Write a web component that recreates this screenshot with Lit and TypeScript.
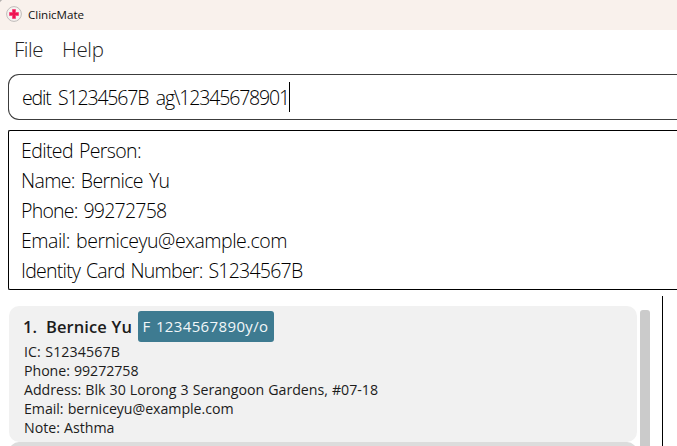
import { LitElement, html, css, svg } from "lit";
import { customElement, property } from "lit/decorators.js";

/** One line of text whose tracking is adjusted to fill a given advance width. */
@customElement("fit-text")
class FitText extends LitElement {
  @property() text = "";
  @property({ type: Number }) width = 0;

  static styles = css`
    :host { display: block; white-space: pre; }
    .run { display: inline-block; }
  `;

  async firstUpdated() {
    await document.fonts.ready;
    const run = this.renderRoot.querySelector(".run") as HTMLElement;
    const natural = run.getBoundingClientRect().width;
    run.style.letterSpacing = `${(this.width - natural) / this.text.length}px`;
  }

  render() {
    return html`<span class="run">${this.text}</span>`;
  }
}

@customElement("app-root")
class AppRoot extends LitElement {
  static styles = css`
    :host {
      display: flex;
      flex-direction: column;
      width: 677px;
      height: 446px;
      overflow: hidden;
      background: #fff;
      color: #000;
      font-family: "Open Sans", "Noto Sans", sans-serif;
    }
    * { box-sizing: border-box; }
    .titlebar {
      flex: none;
      height: 30px;
      display: flex;
      align-items: center;
      gap: 6px;
      padding: 0 0 2px 6px;
      background: radial-gradient(circle at 6px 6px, #f9f1ec 6.5px, #b4b0ae 7.5px) 0 0 / 6px 6px no-repeat, #f9f1ec;
      font-size: 11.6px;
      color: #111;
    }
    .titlebar svg { display: block; }
    .menubar {
      flex: none;
      height: 44px;
      display: flex;
      gap: 19px;
      padding: 4px 0 0 14px;
      font-size: 20.5px;
      font-weight: 300;
      line-height: 30px;
      color: #222;
    }
    .command {
      flex: none;
      height: 46px;
      margin-left: 8px;
      display: flex;
      align-items: center;
      padding-left: 13px;
      border: 1px solid #3c3c3c;
      border-right: 0;
      border-radius: 11px 0 0 11px;
      font-size: 19.5px;
      font-weight: 300;
      line-height: 30px;
      word-spacing: 3.5px;
    }
    .command fit-text { padding-top: 1px; }
    .caret { width: 1px; height: 30px; background: #000; }
    .result {
      flex: none;
      height: 160px;
      margin: 10px 0 0 8px;
      padding: 5px 0 0 12px;
      border: 1px solid #000;
      border-right: 0;
      border-radius: 2px 0 0 2px;
      font-size: 19.5px;
      font-weight: 300;
      line-height: 30px;
      word-spacing: 1.5px;
    }
    .main { flex: 1; display: flex; padding-top: 6px; min-height: 0; }
    .list { width: 628px; margin-left: 9px; padding-top: 10px; }
    .card {
      height: 136px;
      border-radius: 10px;
      padding: 5px 0 0 15px;
      background: #f1f1f1;
      color: #1c1c1c;
      font-size: 14.2px;
      line-height: 19px;
      word-spacing: 0.5px;
    }
    .card.alt { background: #dcdcdc; }
    .head { display: flex; height: 31px; }
    .name { display: flex; font-size: 16.5px; font-weight: 600; line-height: 31px; }
    .name .num { width: 23px; margin-left: -1px; }
    .tag {
      width: 136px;
      margin-left: 6px;
      padding-left: 4.5px;
      border-radius: 3px;
      background: #3e7b91;
      color: #f2f7f9;
      font-size: 15px;
      line-height: 31px;
      word-spacing: 1px;
    }
    .scroll { width: 10px; margin: 14px 0 0 3px; border-radius: 3px 3px 0 0; background: #cbcbcb; }
    .divider { width: 1px; margin-left: 12px; background: #000; }
  `;

  private result: [string, number][] = [
    ["Edited Person:", 120],
    ["Name: Bernice Yu", 148.5],
    ["Phone: 99272758", 145.5],
    ["Email: berniceyu@example.com", 266],
    ["Identity Card Number: S1234567B", 281.5],
  ];

  private details: [string, number][] = [
    ["IC: S1234567B", 96],
    ["Phone: 99272758", 114.5],
    ["Address: Blk 30 Lorong 3 Serangoon Gardens, #07-18", 354],
    ["Email: berniceyu@example.com", 209.5],
    ["Note: Asthma", 90.5],
  ];

  private fit([text, width]: [string, number]) {
    return html`<fit-text .text=${text} .width=${width}></fit-text>`;
  }

  render() {
    return html`
      <div class="titlebar">
        <svg width="16" height="16" viewBox="0 0 16 16">
          ${svg`<circle cx="8" cy="8" r="7.4" fill="#f6f2f0" stroke="#b9b5b3" stroke-width=".9" />
          <path d="M6.5 3.5h3v3h3v3h-3v3h-3v-3h-3v-3h3z" fill="#ee1450" stroke="#f5437a" stroke-width=".8" stroke-linejoin="round" />`}
        </svg>
        ${this.fit(["ClinicMate", 56])}
      </div>
      <div class="menubar">${this.fit(["File", 29])}${this.fit(["Help", 41.5])}</div>
      <div class="command">
        ${this.fit(["edit S1234567B ag\\12345678901", 267])}
        <div class="caret"></div>
      </div>
      <div class="result">${this.result.map((l) => this.fit(l))}</div>
      <div class="main">
        <div class="list">
          <div class="card">
            <div class="head">
              <div class="name">
                <span class="num">1.</span>${this.fit(["Bernice Yu", 86])}
              </div>
              <div class="tag">${this.fit(["F 1234567890y/o", 126])}</div>
            </div>
            ${this.details.map((l) => this.fit(l))}
          </div>
          <div class="card alt"></div>
        </div>
        <div class="scroll"></div>
        <div class="divider"></div>
      </div>
    `;
  }
}
